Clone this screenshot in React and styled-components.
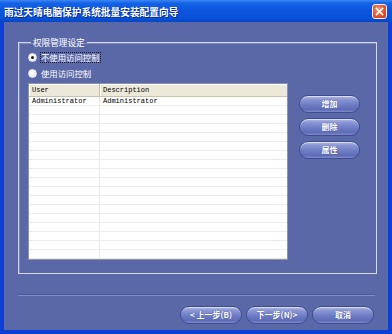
import React, { useState } from 'react';
import styled, { createGlobalStyle } from 'styled-components';

const GlobalStyle = createGlobalStyle`
  html, body {
    margin: 0;
    padding: 0;
    background: #ffffff;
  }
  * {
    box-sizing: border-box;
  }
`;

const cjk = `"Noto Sans CJK SC", "Noto Sans", sans-serif`;
const mono = `"Liberation Mono", "DejaVu Sans Mono", monospace`;

const Window = styled.div`
  width: 392px;
  height: 334px;
  display: flex;
  flex-direction: column;
  font-family: ${cjk};
  overflow: hidden;
`;

const TitleBar = styled.div`
  height: 22px;
  flex: none;
  display: flex;
  align-items: center;
  justify-content: space-between;
  padding: 0 4px 0 4px;
  background: linear-gradient(
    to bottom,
    #3d86f3 0%,
    #1463e6 14%,
    #0a55dc 45%,
    #0852d8 80%,
    #0646c4 100%
  );
`;

const Title = styled.div`
  color: #ffffff;
  font-size: 9.7px;
  font-weight: 700;
  letter-spacing: 0;
  line-height: 12px;
  margin-top: 1px;
  text-shadow: 1px 1px 0 #0a2a8a;
`;

const CloseButton = styled.div`
  width: 15px;
  height: 15px;
  border-radius: 3px;
  border: 1px solid #f2f2f2;
  background: radial-gradient(circle at 40% 35%, #f19a7c 0%, #e2542c 55%, #c63a16 100%);
  display: flex;
  align-items: center;
  justify-content: center;
  margin-right: 1px;
`;

const Frame = styled.div`
  flex: 1;
  display: flex;
  flex-direction: column;
  background: #5a68a8;
  border-left: 4px solid #0b3fd6;
  border-right: 4px solid #0b3fd6;
  border-bottom: 4px solid #0b3fd6;
  padding: 15px 11px 0 14px;
`;

const Group = styled.fieldset`
  margin: 0;
  padding: 4px 15px 11px 9px;
  min-width: 0;
  height: 237px;
  border: 1px solid #d4d8ea;
  box-shadow: inset 1px 1px 0 #7d89c0;
  border-radius: 0;
`;

const Legend = styled.legend`
  padding: 0 2px;
  margin-left: 3px;
  color: #ffffff;
  font-size: 8.6px;
  line-height: 10px;
`;

const RadioRow = styled.label`
  display: flex;
  align-items: center;
  height: 12px;
  gap: 3px;
  margin-bottom: 4px;
  color: #ffffff;
  font-size: 8.4px;
  cursor: default;
`;

const RadioDot = styled.span`
  width: 9px;
  height: 9px;
  border-radius: 50%;
  background: radial-gradient(circle at 35% 35%, #ffffff 0%, #f2f2f2 60%, #cfd3e4 100%);
  border: 1px solid #e8eaf4;
  display: flex;
  align-items: center;
  justify-content: center;
  flex: none;
  &::after {
    content: '';
    width: 3px;
    height: 3px;
    border-radius: 50%;
    background: ${({ checked }) => (checked ? '#1a1a1a' : 'transparent')};
  }
`;

const RadioText = styled.span`
  line-height: 11px;
  padding: 0 1px;
  outline: ${({ focused }) => (focused ? '1px dotted #1a1a2a' : 'none')};
  outline-offset: -1px;
`;

const MainRow = styled.div`
  display: flex;
  align-items: flex-start;
  gap: 11px;
  margin-top: 2px;
`;

const Table = styled.div`
  width: 260px;
  height: 177px;
  background: #ffffff;
  border: 1px solid #8d93ab;
  overflow: hidden;
  font-family: ${mono};
  font-size: 7px;
  color: #000000;
`;

const Row = styled.div`
  display: grid;
  grid-template-columns: 71px 1fr;
  height: ${({ head }) => (head ? '13px' : '9px')};
  background: ${({ head }) => (head ? '#ece9d8' : '#ffffff')};
  border-bottom: 1px solid ${({ head }) => (head ? '#c7c3ad' : '#ebeae6')};
`;

const Cell = styled.div`
  display: flex;
  align-items: center;
  padding-left: 3px;
  white-space: nowrap;
  border-right: 1px solid ${({ head }) => (head ? '#c7c3ad' : '#ebeae6')};
  box-shadow: ${({ head }) => (head ? 'inset 1px 1px 0 #ffffff' : 'none')};
  &:last-child {
    border-right: none;
  }
`;

const SideButtons = styled.div`
  display: flex;
  flex-direction: column;
  gap: 5px;
  margin-top: 12px;
`;

const PillButton = styled.button`
  width: ${({ w }) => w || 61}px;
  height: 18px;
  border-radius: 9px;
  border: 1px solid #3d4b92;
  padding: 0;
  background: linear-gradient(
    to bottom,
    #b3bbe6 0%,
    #8a96d4 22%,
    #6e7cc4 55%,
    #5e6cb6 85%,
    #7f8bcc 100%
  );
  box-shadow: inset 0 1px 0 rgba(255, 255, 255, 0.55);
  color: #ffffff;
  font-family: ${cjk};
  font-size: 8px;
  font-weight: 700;
  line-height: 16px;
  text-shadow: 0 0 1px #3d4b92;
  cursor: pointer;
`;

const Separator = styled.div`
  margin-top: 20px;
  margin-right: 2px;
  height: 2px;
  border-top: 1px solid #4a5898;
  border-bottom: 1px solid #7e8ccb;
`;

const Footer = styled.div`
  display: flex;
  justify-content: flex-end;
  gap: 4px;
  margin-top: 10px;
  margin-right: 3px;
`;

const users = [{ user: 'Administrator', desc: 'Administrator' }];

const App = () => {
  const [mode, setMode] = useState('off');
  const blanks = Array.from({ length: 20 - users.length });

  return (
    <>
      <GlobalStyle />
      <Window>
        <TitleBar>
          <Title>雨过天晴电脑保护系统批量安装配置向导</Title>
          <CloseButton>
            <svg width="9" height="9" viewBox="0 0 9 9">
              <path d="M1.5 1.5 L7.5 7.5 M7.5 1.5 L1.5 7.5" stroke="#ffffff" strokeWidth="1.6" strokeLinecap="square" />
            </svg>
          </CloseButton>
        </TitleBar>
        <Frame>
          <Group>
            <Legend>权限管理设定</Legend>
            <RadioRow onClick={() => setMode('off')}>
              <RadioDot checked={mode === 'off'} />
              <RadioText focused={mode === 'off'}>不使用访问控制</RadioText>
            </RadioRow>
            <RadioRow onClick={() => setMode('on')}>
              <RadioDot checked={mode === 'on'} />
              <RadioText focused={mode === 'on'}>使用访问控制</RadioText>
            </RadioRow>
            <MainRow>
              <Table>
                <Row head>
                  <Cell head>User</Cell>
                  <Cell head>Description</Cell>
                </Row>
                {users.map((u) => (
                  <Row key={u.user}>
                    <Cell>{u.user}</Cell>
                    <Cell>{u.desc}</Cell>
                  </Row>
                ))}
                {blanks.map((_, i) => (
                  <Row key={i}>
                    <Cell />
                    <Cell />
                  </Row>
                ))}
              </Table>
              <SideButtons>
                <PillButton>增加</PillButton>
                <PillButton>删除</PillButton>
                <PillButton>属性</PillButton>
              </SideButtons>
            </MainRow>
          </Group>
          <Separator />
          <Footer>
            <PillButton w={62}>&lt; 上一步(B)</PillButton>
            <PillButton w={62}>下一步(N)&gt;</PillButton>
            <PillButton w={62}>取消</PillButton>
          </Footer>
        </Frame>
      </Window>
    </>
  );
};

export default App;
